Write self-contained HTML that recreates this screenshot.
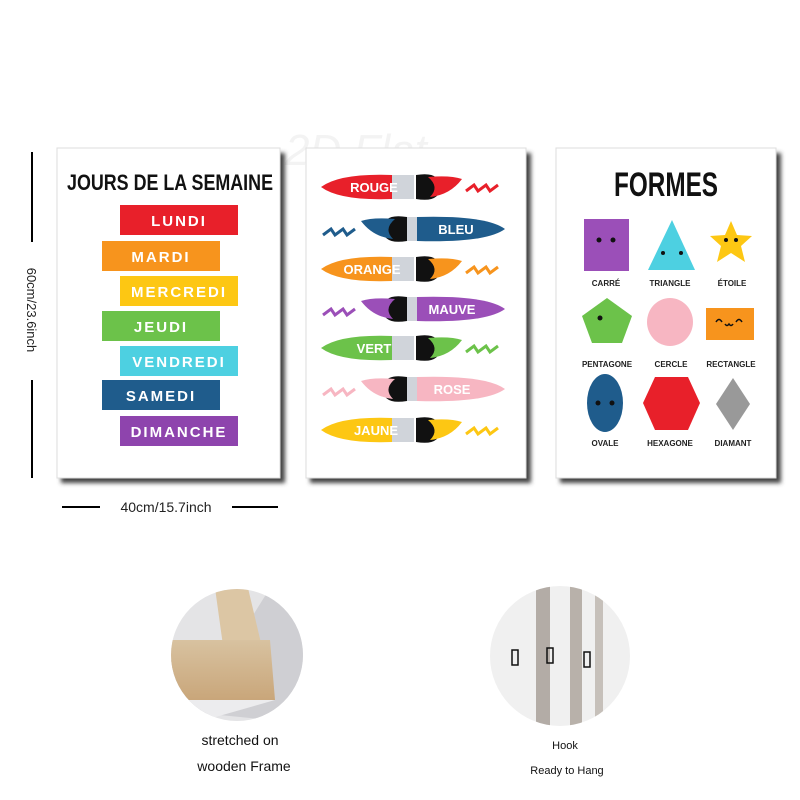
<!DOCTYPE html>
<html><head><meta charset="utf-8"><style>
html,body{margin:0;padding:0;background:#fff;}
svg{display:block}
text{font-family:"Liberation Sans",sans-serif}
</style></head><body>
<svg width="800" height="800" viewBox="0 0 800 800" xmlns="http://www.w3.org/2000/svg">
<defs>
<filter id="sh" x="-10%" y="-10%" width="130%" height="130%"><feGaussianBlur stdDeviation="2"/></filter>
<linearGradient id="wood" x1="0" y1="0" x2="0" y2="1"><stop offset="0" stop-color="#d8c2a0"/><stop offset="1" stop-color="#c9a67a"/></linearGradient>
<clipPath id="c1"><circle cx="237" cy="655" r="66"/></clipPath>
<clipPath id="c2"><circle cx="560" cy="656" r="70"/></clipPath>
</defs>
<rect width="800" height="800" fill="#fff"/>
<text x="285" y="165" font-size="44" fill="#f3f3f3" font-style="italic">2D Flat</text>

<line x1="32" y1="152" x2="32" y2="242" stroke="#000" stroke-width="2"/>
<line x1="32" y1="380" x2="32" y2="478" stroke="#000" stroke-width="2"/>
<text transform="translate(27,310) rotate(90)" font-size="13" text-anchor="middle" fill="#222">60cm/23.6inch</text>
<line x1="62" y1="507" x2="100" y2="507" stroke="#000" stroke-width="2"/>
<line x1="232" y1="507" x2="278" y2="507" stroke="#000" stroke-width="2"/>
<text x="166" y="512" font-size="14" text-anchor="middle" fill="#222">40cm/15.7inch</text>

<rect x="61" y="153" width="224" height="330" fill="#444" filter="url(#sh)"/>
<rect x="310" y="153" width="221" height="330" fill="#444" filter="url(#sh)"/>
<rect x="560" y="153" width="221" height="330" fill="#444" filter="url(#sh)"/>
<rect x="57" y="148" width="223" height="330" fill="#fff" stroke="#ddd"/>
<rect x="306" y="148" width="220" height="330" fill="#fff" stroke="#ddd"/>
<rect x="556" y="148" width="220" height="330" fill="#fff" stroke="#ddd"/>

<text x="170" y="190" font-size="22" font-weight="bold" text-anchor="middle" textLength="206" lengthAdjust="spacingAndGlyphs" fill="#111">JOURS DE LA SEMAINE</text>
<g font-size="15" font-weight="bold" fill="#fff" text-anchor="middle" letter-spacing="2">
<rect x="120" y="205" width="118" height="30" fill="#e8202a"/><text x="179" y="226">LUNDI</text>
<rect x="102" y="241" width="118" height="30" fill="#f7941d"/><text x="161" y="262">MARDI</text>
<rect x="120" y="276" width="118" height="30" fill="#fdc713"/><text x="179" y="297">MERCREDI</text>
<rect x="102" y="311" width="118" height="30" fill="#6cc24a"/><text x="161" y="332">JEUDI</text>
<rect x="120" y="346" width="118" height="30" fill="#4dd0e1"/><text x="179" y="367">VENDREDI</text>
<rect x="102" y="380" width="118" height="30" fill="#1f5c8c"/><text x="161" y="401">SAMEDI</text>
<rect x="120" y="416" width="118" height="30" fill="#8e44ad"/><text x="179" y="437">DIMANCHE</text>
</g>

<g font-size="13" font-weight="bold" fill="#fff" text-anchor="middle">
<g transform="translate(0,187)">
<path d="M321 0 Q340 -14 392 -12 L392 12 Q340 14 321 0Z" fill="#e8202a"/>
<rect x="392" y="-12" width="22" height="24" fill="#d0d4da"/>
<path d="M416 -12 Q440 -16 440 0 Q440 16 416 12Z" fill="#111"/>
<path d="M428 -10 Q450 -12 462 -8 Q450 8 430 10 Q440 0 428 -10Z" fill="#e8202a"/>
<path d="M466 4 l8 -6 l4 6 l8 -6 l4 6 l8 -6" stroke="#e8202a" stroke-width="3" fill="none"/>
<text x="374" y="5">ROUGE</text></g>
<g transform="translate(0,269)">
<path d="M321 0 Q340 -14 392 -12 L392 12 Q340 14 321 0Z" fill="#f7941d"/>
<rect x="392" y="-12" width="22" height="24" fill="#d0d4da"/>
<path d="M416 -12 Q440 -16 440 0 Q440 16 416 12Z" fill="#111"/>
<path d="M428 -10 Q450 -12 462 -8 Q450 8 430 10 Q440 0 428 -10Z" fill="#f7941d"/>
<path d="M466 4 l8 -6 l4 6 l8 -6 l4 6 l8 -6" stroke="#f7941d" stroke-width="3" fill="none"/>
<text x="372" y="5">ORANGE</text></g>
<g transform="translate(0,348)">
<path d="M321 0 Q340 -14 392 -12 L392 12 Q340 14 321 0Z" fill="#6cc24a"/>
<rect x="392" y="-12" width="22" height="24" fill="#d0d4da"/>
<path d="M416 -12 Q440 -16 440 0 Q440 16 416 12Z" fill="#111"/>
<path d="M428 -10 Q450 -12 462 -8 Q450 8 430 10 Q440 0 428 -10Z" fill="#6cc24a"/>
<path d="M466 4 l8 -6 l4 6 l8 -6 l4 6 l8 -6" stroke="#6cc24a" stroke-width="3" fill="none"/>
<text x="374" y="5">VERT</text></g>
<g transform="translate(0,430)">
<path d="M321 0 Q340 -14 392 -12 L392 12 Q340 14 321 0Z" fill="#fdc713"/>
<rect x="392" y="-12" width="22" height="24" fill="#d0d4da"/>
<path d="M416 -12 Q440 -16 440 0 Q440 16 416 12Z" fill="#111"/>
<path d="M428 -10 Q450 -12 462 -8 Q450 8 430 10 Q440 0 428 -10Z" fill="#fdc713"/>
<path d="M466 4 l8 -6 l4 6 l8 -6 l4 6 l8 -6" stroke="#fdc713" stroke-width="3" fill="none"/>
<text x="376" y="5">JAUNE</text></g>
<g transform="translate(0,229)">
<path d="M505 0 Q486 -14 417 -12 L417 12 Q486 14 505 0Z" fill="#1f5c8c"/>
<rect x="407" y="-12" width="10" height="24" fill="#d0d4da"/>
<path d="M407 -12 Q383 -16 383 0 Q383 16 407 12Z" fill="#111"/>
<path d="M395 -10 Q373 -12 361 -8 Q373 8 393 10 Q383 0 395 -10Z" fill="#1f5c8c"/>
<path d="M323 6 l8 -6 l4 6 l8 -6 l4 6 l8 -6" stroke="#1f5c8c" stroke-width="3" fill="none"/>
<text x="456" y="5">BLEU</text></g>
<g transform="translate(0,309)">
<path d="M505 0 Q486 -14 417 -12 L417 12 Q486 14 505 0Z" fill="#9b4fb8"/>
<rect x="407" y="-12" width="10" height="24" fill="#d0d4da"/>
<path d="M407 -12 Q383 -16 383 0 Q383 16 407 12Z" fill="#111"/>
<path d="M395 -10 Q373 -12 361 -8 Q373 8 393 10 Q383 0 395 -10Z" fill="#9b4fb8"/>
<path d="M323 6 l8 -6 l4 6 l8 -6 l4 6 l8 -6" stroke="#9b4fb8" stroke-width="3" fill="none"/>
<text x="452" y="5">MAUVE</text></g>
<g transform="translate(0,389)">
<path d="M505 0 Q486 -14 417 -12 L417 12 Q486 14 505 0Z" fill="#f7b6c2"/>
<rect x="407" y="-12" width="10" height="24" fill="#d0d4da"/>
<path d="M407 -12 Q383 -16 383 0 Q383 16 407 12Z" fill="#111"/>
<path d="M395 -10 Q373 -12 361 -8 Q373 8 393 10 Q383 0 395 -10Z" fill="#f7b6c2"/>
<path d="M323 6 l8 -6 l4 6 l8 -6 l4 6 l8 -6" stroke="#f7b6c2" stroke-width="3" fill="none"/>
<text x="452" y="5">ROSE</text></g>
</g>

<text x="666" y="196" font-size="34" font-weight="bold" text-anchor="middle" fill="#111" textLength="104" lengthAdjust="spacingAndGlyphs">FORMES</text>
<rect x="584" y="219" width="45" height="52" fill="#9b4fb8"/>
<polygon points="672,220 695,270 648,270" fill="#4dd0e1"/>
<polygon points="731,221 737,235 752,236 741,246 745,262 731,253 717,262 721,246 710,236 725,235" fill="#fdc713"/>
<polygon points="607,298 632,316 622,343 592,343 582,316" fill="#6cc24a"/>
<ellipse cx="670" cy="322" rx="23" ry="24" fill="#f7b6c2"/>
<rect x="706" y="308" width="48" height="32" fill="#f7941d"/>
<ellipse cx="605" cy="403" rx="18" ry="29" fill="#1f5c8c"/>
<polygon points="655,377 688,377 700,403 688,430 655,430 643,403" fill="#e8202a"/>
<polygon points="733,378 750,404 733,430 716,404" fill="#999"/>
<g fill="#111"><circle cx="599" cy="240" r="2.5"/><circle cx="613" cy="240" r="2.5"/><circle cx="663" cy="253" r="2"/><circle cx="681" cy="253" r="2"/><circle cx="726" cy="240" r="2"/><circle cx="736" cy="240" r="2"/><circle cx="600" cy="318" r="2.5"/><circle cx="598" cy="403" r="2.5"/><circle cx="612" cy="403" r="2.5"/></g>
<path d="M716 322 q3 -5 6 0 M736 322 q3 -5 6 0 M725 324 q2 3 4 0 q2 3 4 0" stroke="#111" stroke-width="1.5" fill="none"/>
<g font-size="8" font-weight="bold" fill="#222" text-anchor="middle">
<text x="606" y="286">CARRÉ</text><text x="670" y="286">TRIANGLE</text><text x="732" y="286">ÉTOILE</text>
<text x="607" y="367">PENTAGONE</text><text x="671" y="367">CERCLE</text><text x="731" y="367">RECTANGLE</text>
<text x="605" y="446">OVALE</text><text x="670" y="446">HEXAGONE</text><text x="733" y="446">DIAMANT</text>
</g>

<g clip-path="url(#c1)">
<rect x="170" y="588" width="140" height="140" fill="#e4e4e6"/>
<polygon points="170,660 225,660 270,588 320,588 320,700 270,720 170,710" fill="#cfcfd3"/>
<polygon points="215,588 248,588 265,660 225,660" fill="#dcc6a4"/>
<polygon points="170,640 270,640 275,700 170,700" fill="url(#wood)"/>
<polygon points="170,700 275,700 170,730" fill="#ececee"/>
</g>
<g clip-path="url(#c2)">
<rect x="490" y="586" width="140" height="140" fill="#f0f0f0"/>
<rect x="536" y="586" width="14" height="140" fill="#b3aca6"/>
<rect x="570" y="586" width="12" height="140" fill="#b8b1aa"/>
<rect x="595" y="586" width="8" height="140" fill="#c6c0ba"/>
<rect x="512" y="650" width="6" height="15" fill="none" stroke="#111" stroke-width="1.5"/>
<rect x="547" y="648" width="6" height="15" fill="none" stroke="#111" stroke-width="1.5"/>
<rect x="584" y="652" width="6" height="15" fill="none" stroke="#111" stroke-width="1.5"/>
</g>
<text x="240" y="745" font-size="14" text-anchor="middle" fill="#111">stretched on</text>
<text x="244" y="771" font-size="14" text-anchor="middle" fill="#111">wooden Frame</text>
<text x="565" y="749" font-size="11" text-anchor="middle" fill="#111">Hook</text>
<text x="567" y="774" font-size="11" text-anchor="middle" fill="#111">Ready to Hang</text>
</svg>
</body></html>
